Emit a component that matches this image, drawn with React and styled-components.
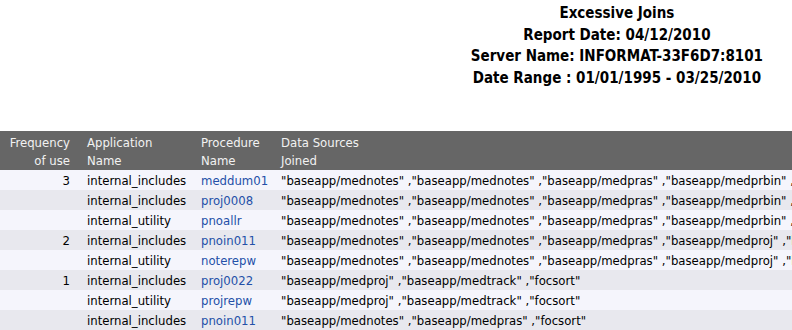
import React from "react";
import styled, { createGlobalStyle } from "styled-components";

const GlobalStyle = createGlobalStyle`
  html, body {
    margin: 0;
    padding: 0;
    background: #ffffff;
    overflow: hidden;
  }
  body {
    font-family: "DejaVu Sans Condensed", "DejaVu Sans", sans-serif;
    font-stretch: condensed;
    color: #000;
  }
`;

const rows = [
  {
    freq: "3",
    app: "internal_includes",
    proc: "meddum01",
    sources: ["baseapp/mednotes", "baseapp/mednotes", "baseapp/medpras", "baseapp/medprbin", "baseapp/medproj"]
  },
  {
    app: "internal_includes",
    proc: "proj0008",
    sources: ["baseapp/mednotes", "baseapp/mednotes", "baseapp/medpras", "baseapp/medprbin", "baseapp/medproj"]
  },
  {
    app: "internal_utility",
    proc: "pnoallr",
    sources: ["baseapp/mednotes", "baseapp/mednotes", "baseapp/medpras", "baseapp/medprbin", "baseapp/medproj"]
  },
  {
    freq: "2",
    app: "internal_includes",
    proc: "pnoin011",
    sources: ["baseapp/mednotes", "baseapp/mednotes", "baseapp/medpras", "baseapp/medproj", "baseapp/medtrack"]
  },
  {
    app: "internal_utility",
    proc: "noterepw",
    sources: ["baseapp/mednotes", "baseapp/mednotes", "baseapp/medpras", "baseapp/medproj", "baseapp/medtrack"]
  },
  {
    freq: "1",
    app: "internal_includes",
    proc: "proj0022",
    sources: ["baseapp/medproj", "baseapp/medtrack", "focsort"]
  },
  {
    app: "internal_utility",
    proc: "projrepw",
    sources: ["baseapp/medproj", "baseapp/medtrack", "focsort"]
  },
  {
    app: "internal_includes",
    proc: "pnoin011",
    sources: ["baseapp/mednotes", "baseapp/medpras", "focsort"]
  }
];

export default function App() {
  return (
    <Page>
      <GlobalStyle />
      <TitleArea>
        <TitleBlock>
          <TitleLine>Excessive Joins</TitleLine>
          <TitleLine>Report Date: 04/12/2010</TitleLine>
          <TitleLine>Server Name: INFORMAT-33F6D7:8101</TitleLine>
          <TitleLine>Date Range : 01/01/1995 - 03/25/2010</TitleLine>
        </TitleBlock>
      </TitleArea>
      <Report>
        <colgroup>
          <col style={{ width: 82 }} />
          <col style={{ width: 114 }} />
          <col style={{ width: 80 }} />
          <col />
        </colgroup>
        <thead>
          <tr>
            <HeadCell align="right">
              Frequency
              <br />
              of use
            </HeadCell>
            <HeadCell>
              Application
              <br />
              Name
            </HeadCell>
            <HeadCell>
              Procedure
              <br />
              Name
            </HeadCell>
            <HeadCell>
              Data Sources
              <br />
              Joined
            </HeadCell>
          </tr>
        </thead>
        <tbody>
          {rows.map((row, i) => (
            <Row key={i} odd={i % 2 === 1}>
              <Cell align="right">{row.freq || ""}</Cell>
              <Cell>{row.app}</Cell>
              <ProcCell>{row.proc}</ProcCell>
              <Cell>{row.sources.map(s => `"${s}"`).join(" ,")}</Cell>
            </Row>
          ))}
        </tbody>
      </Report>
    </Page>
  );
}

const Page = styled.div`
  width: 792px;
  height: 330px;
  overflow: hidden;
`;

const TitleArea = styled.div`
  display: flex;
  justify-content: flex-end;
  padding: 3px 29px 0 0;
  height: 128px;
  box-sizing: border-box;
`;

const TitleBlock = styled.div`
  text-align: center;
  font-weight: bold;
  font-size: 15px;
  line-height: 21.7px;
`;

const TitleLine = styled.div`
  white-space: nowrap;
`;

const Report = styled.table`
  border-collapse: collapse;
  table-layout: fixed;
  font-size: 13px;
  margin-top: 3px;
  width: 1100px;
`;

const HeadCell = styled.th`
  box-sizing: border-box;
  background: #666666;
  color: #f2f2f2;
  font-weight: normal;
  text-align: ${p => p.align || "left"};
  vertical-align: top;
  line-height: 18px;
  padding: 3px ${p => (p.align === "right" ? "12px" : "4px")} 0 5px;
  white-space: nowrap;
`;

const Row = styled.tr.withConfig({ shouldForwardProp: p => p !== "odd" })`
  background: ${p => (p.odd ? "#e8e8ee" : "#f5f5fc")};
  height: 20px;
`;

const Cell = styled.td`
  box-sizing: border-box;
  text-align: ${p => p.align || "left"};
  padding: 1px ${p => (p.align === "right" ? "12px" : "4px")} 0 5px;
  line-height: 19px;
  white-space: nowrap;
  overflow: hidden;
`;

const ProcCell = styled(Cell)`
  color: #2450a8;
`;
